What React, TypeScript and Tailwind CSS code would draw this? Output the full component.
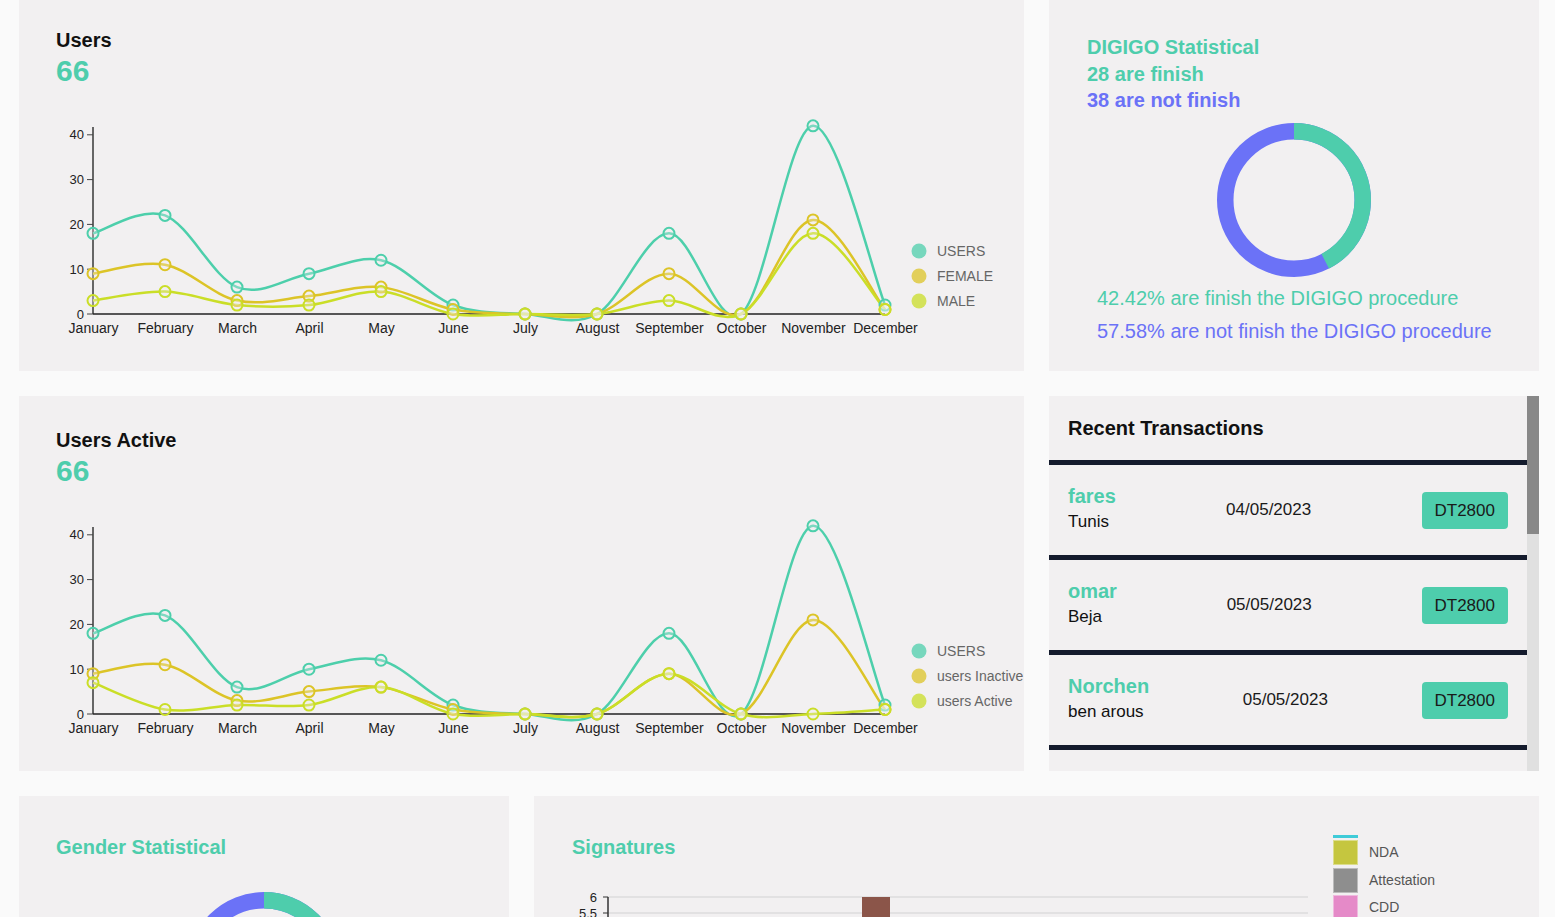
import React from "react";

const MONTHS = [
  "January","February","March","April","May","June","July","August","September","October","November","December",
];

type Series = { name: string; color: string; data: number[] };

const X = (i: number) => 37 + 72 * i;
const Y = (v: number) => 225 - v * 4.48;

function cardinalPath(vals: number[]) {
  const pts = vals.map((v, i) => [X(i), Y(v)] as [number, number]);
  const k = 1 / 6;
  let d = `M${pts[0][0]},${pts[0][1]}`;
  for (let i = 0; i < pts.length - 1; i++) {
    const p0 = pts[i - 1] ?? pts[i];
    const p1 = pts[i];
    const p2 = pts[i + 1];
    const p3 = pts[i + 2] ?? pts[i + 1];
    const c1x = p1[0] + k * (p2[0] - p0[0]);
    const c1y = p1[1] + k * (p2[1] - p0[1]);
    const c2x = p2[0] - k * (p3[0] - p1[0]);
    const c2y = p2[1] - k * (p3[1] - p1[1]);
    d += ` C${c1x},${c1y} ${c2x},${c2y} ${p2[0]},${p2[1]}`;
  }
  return d;
}

function LineChart({ series }: { series: Series[] }) {
  return (
    <svg width={968} height={260} className="block">
      <line x1={37} y1={38} x2={37} y2={225} stroke="#666" strokeWidth={2} />
      {[0, 10, 20, 30, 40].map((t) => (
        <g key={t}>
          <line x1={31} y1={Y(t)} x2={37} y2={Y(t)} stroke="#444" strokeWidth={1} />
          <text x={28} y={Y(t)} dy="0.35em" textAnchor="end" fontSize={13} fill="#222">
            {t}
          </text>
        </g>
      ))}
      <line x1={37} y1={225} x2={X(11)} y2={225} stroke="#222" strokeWidth={1.5} />
      {MONTHS.map((m, i) => (
        <text key={m} x={X(i) + 0.5} y={239} dy="0.35em" textAnchor="middle" fontSize={14} fill="#222">
          {m}
        </text>
      ))}
      {series.map((s) => (
        <path key={s.name} d={cardinalPath(s.data)} fill="none" stroke={s.color} strokeWidth={2.5} />
      ))}
      {series.map((s) =>
        s.data.map((v, i) => (
          <circle
            key={s.name + i}
            cx={X(i)}
            cy={Y(v)}
            r={5.5}
            fill="#f2f0f1"
            fillOpacity={0.3}
            stroke={s.color}
            strokeWidth={2}
          />
        ))
      )}
      {series.map((s, i) => (
        <g key={"lg" + s.name}>
          <circle cx={863} cy={162 + 25 * i} r={7.5} fill={s.color} fillOpacity={0.75} />
          <text x={881} y={162 + 25 * i} dy="0.35em" fontSize={14} fill="#666">
            {s.name}
          </text>
        </g>
      ))}
    </svg>
  );
}

function Donut({ pct }: { pct: number }) {
  const r = 68.75;
  const C = 2 * Math.PI * r;
  return (
    <svg width={160} height={160} className="block">
      <g transform="rotate(-90 80 80)">
        <circle cx={80} cy={80} r={r} fill="none" stroke="#6b72f7" strokeWidth={16.5} />
        <circle
          cx={80}
          cy={80}
          r={r}
          fill="none"
          stroke="#4ecdac"
          strokeWidth={16.5}
          strokeDasharray={`${pct * C} ${C}`}
        />
      </g>
    </svg>
  );
}

function UsersCard({ title, series }: { title: string; series: Series[] }) {
  return (
    <div className="w-[1005px] h-[375px] bg-[#f2f0f1] pl-[37px] pt-[32px] overflow-hidden">
      <h2 className="text-[20px] leading-6 font-bold text-[#111]">{title}</h2>
      <div className="text-[30px] leading-[37px] font-bold text-[#4ecdac]">66</div>
      <LineChart series={series} />
    </div>
  );
}

const TEAL = "#4dcfab";
const FEM = "#dcc427";
const MAL = "#cade27";

const usersSeries: Series[] = [
  { name: "USERS", color: TEAL, data: [18, 22, 6, 9, 12, 2, 0, 0, 18, 0, 42, 2] },
  { name: "FEMALE", color: FEM, data: [9, 11, 3, 4, 6, 1, 0, 0, 9, 0, 21, 1] },
  { name: "MALE", color: MAL, data: [3, 5, 2, 2, 5, 0, 0, 0, 3, 0, 18, 1] },
];

const activeSeries: Series[] = [
  { name: "USERS", color: TEAL, data: [18, 22, 6, 10, 12, 2, 0, 0, 18, 0, 42, 2] },
  { name: "users Inactive", color: FEM, data: [9, 11, 3, 5, 6, 1, 0, 0, 9, 0, 21, 1] },
  { name: "users Active", color: MAL, data: [7, 1, 2, 2, 6, 0, 0, 0, 9, 0, 0, 1] },
];

const transactions = [
  { name: "fares", city: "Tunis", date: "04/05/2023" },
  { name: "omar", city: "Beja", date: "05/05/2023" },
  { name: "Norchen", city: "ben arous", date: "05/05/2023" },
];

function Bar() {
  return <div className="h-[5px] bg-[#141b2d]" />;
}

export default function App() {
  const sigTicks = [6, 5.5];
  const gridTicks = [6, 5.5, 5, 4.5, 4, 3.5, 3, 2.5, 2, 1.5, 1, 0.5, 0];
  const SY = (v: number) => 38 + (6 - v) * 32;
  return (
    <div className="min-h-screen bg-[#fafafa] font-['Liberation_Sans',Arial,sans-serif] text-[#111]">
      <div className="-mt-1 pl-[19px] pr-[16px] flex flex-col gap-[25px] h-[921px] overflow-hidden">
        {/* Row 1 */}
        <div className="flex gap-[25px]">
          <UsersCard title="Users" series={usersSeries} />
          <div className="w-[490px] h-[375px] bg-[#f2f0f1] pt-[38px] flex flex-col">
            <div className="pl-[38px] text-[20px] leading-[26.5px] font-bold">
              <div className="text-[#4ecdac]">DIGIGO Statistical</div>
              <div className="text-[#4ecdac]">28 are finish</div>
              <div className="text-[#6b72f7]">38 are not finish</div>
            </div>
            <div className="flex justify-center mt-[6.5px]">
              <Donut pct={0.4242} />
            </div>
            <div className="pl-[48px] mt-[1.5px] text-[20px] leading-[33px]">
              <div className="text-[#4ecdac]">42.42% are finish the DIGIGO procedure</div>
              <div className="text-[#6b72f7]">57.58% are not finish the DIGIGO procedure</div>
            </div>
          </div>
        </div>

        {/* Row 2 */}
        <div className="flex gap-[25px]">
          <UsersCard title="Users Active" series={activeSeries} />
          <div className="w-[490px] h-[375px] bg-[#f2f0f1] flex overflow-hidden">
            <div className="w-[478px] flex flex-col">
              <div className="h-[64px] flex items-center pl-[19px]">
                <h2 className="text-[20px] font-bold text-[#111]">Recent Transactions</h2>
              </div>
              <Bar />
              {transactions.map((t) => (
                <React.Fragment key={t.name}>
                  <div className="h-[90px] flex items-center justify-between px-[19px]">
                    <div className="flex flex-col">
                      <span className="text-[20px] leading-6 font-bold text-[#4ecdac]">{t.name}</span>
                      <span className="text-[17px] leading-[28px] text-[#111]">{t.city}</span>
                    </div>
                    <span className="text-[17px] text-[#1a1a1a]">{t.date}</span>
                    <span className="bg-[#4ecdac] rounded-[4px] px-[13px] py-[8px] text-[17px] leading-[21px] text-[#1a1a1a]">
                      DT2800
                    </span>
                  </div>
                  <Bar />
                </React.Fragment>
              ))}
            </div>
            <div className="w-[12px] bg-[#e0e0e0]">
              <div className="h-[138px] bg-[#888888]" />
            </div>
          </div>
        </div>

        {/* Row 3 */}
        <div className="flex gap-[25px]">
          <div className="w-[490px] h-[400px] bg-[#f2f0f1] pt-[39px] flex flex-col">
            <h2 className="pl-[37px] text-[20px] leading-6 font-bold text-[#4ecdac]">Gender Statistical</h2>
            <div className="flex justify-center mt-[30px]">
              <Donut pct={0.5} />
            </div>
          </div>
          <div className="w-[1005px] h-[400px] bg-[#f2f0f1] flex">
            <div className="w-[799px] pl-[38px] pt-[39px] flex flex-col">
              <h2 className="text-[20px] leading-6 font-bold text-[#4ecdac]">Signatures</h2>
              <svg width={761} height={260} className="block">
                {gridTicks.map((t) => (
                  <g key={t}>
                    <line x1={36} y1={SY(t)} x2={736} y2={SY(t)} stroke="#dcdcdc" strokeWidth={1.5} />
                    <line x1={31} y1={SY(t)} x2={36} y2={SY(t)} stroke="#333" strokeWidth={1} />
                  </g>
                ))}
                {sigTicks.map((t) => (
                  <text key={t} x={25} y={SY(t)} dy="0.35em" textAnchor="end" fontSize={13} fill="#222">
                    {t}
                  </text>
                ))}
                <line x1={36} y1={SY(6)} x2={36} y2={SY(0)} stroke="#333" strokeWidth={1.5} />
                <rect x={290} y={SY(6)} width={28} height={SY(0) - SY(6)} fill="#8b5549" />
              </svg>
            </div>
            <div className="pt-[39px] flex flex-col gap-[2.5px]">
              <div className="w-[25px] h-[2.5px] bg-[#3fcbd8]" />
              {[
                { label: "NDA", color: "#c5c63f" },
                { label: "Attestation", color: "#8e8e8e" },
                { label: "CDD", color: "#e58ac8" },
              ].map((l) => (
                <div key={l.label} className="flex items-center gap-[11px]">
                  <div className="w-[25px] h-[25px] border border-white/40" style={{ backgroundColor: l.color }} />
                  <span className="text-[14px] text-[#555]">{l.label}</span>
                </div>
              ))}
            </div>
          </div>
        </div>
      </div>
    </div>
  );
}
